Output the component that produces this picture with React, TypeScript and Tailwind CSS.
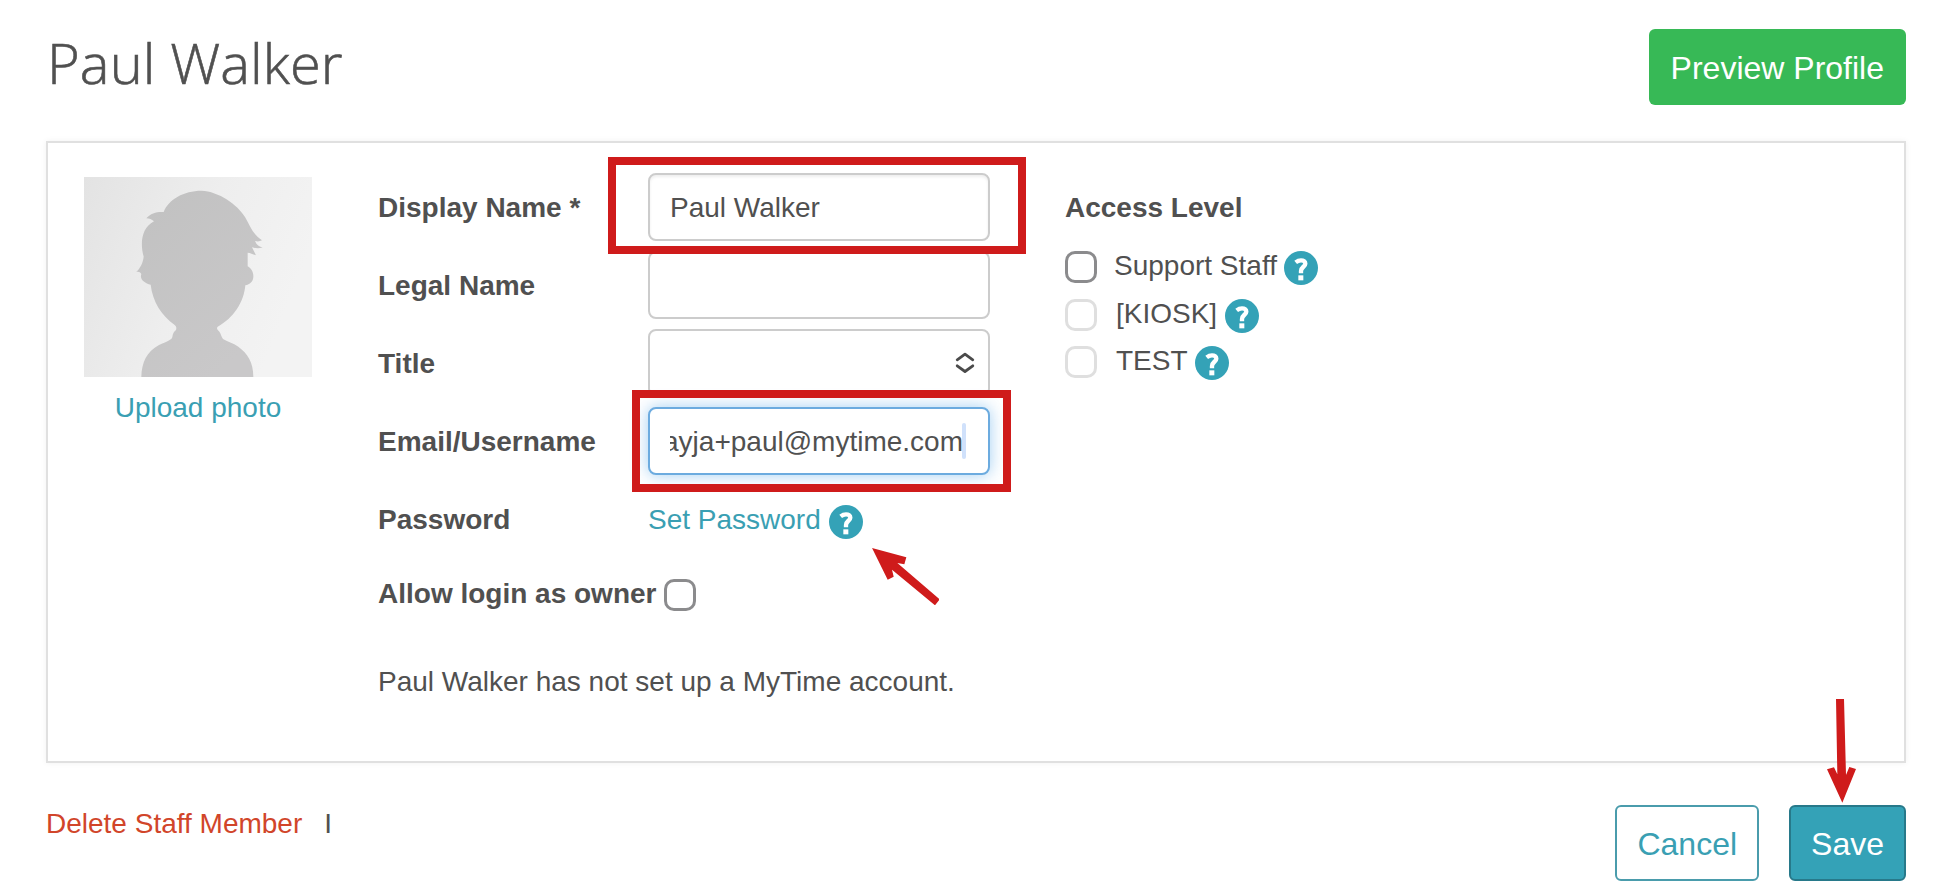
import React from 'react';
import { clsx } from 'clsx';

const HelpIcon = ({ className = '' }: { className?: string }) => (
  <svg viewBox="0 0 102 102" className={clsx('w-[34px] h-[34px] shrink-0', className)} aria-label="Help">
    <circle cx="51" cy="51" r="51" fill="#34a2b7" />
    <path d="M35 34 C40 30 46 28 51 28 C59 28 64 32 64 38 C64 47 51 48 51 60 L51 67" fill="none" stroke="#fff" strokeWidth="13" />
    <rect x="43" y="73" width="15" height="15" fill="#fff" />
  </svg>
);

const Checkbox = ({ disabled = false, className = '' }: { disabled?: boolean; className?: string }) => (
  <span
    role="checkbox"
    aria-checked={false}
    className={clsx(
      'block w-8 h-8 shrink-0 rounded-[10px] border-3 bg-white',
      disabled ? 'border-[#dfdfdf]' : 'border-[#8b8b8d]',
      className,
    )}
  />
);

const Avatar = () => (
  <svg viewBox="0 0 684 600" className="block w-[228px] h-[200px]">
    <defs>
      <linearGradient id="avatarBg" x1="0" y1="0" x2="1" y2="0.35">
        <stop offset="0" stopColor="#e3e3e3" />
        <stop offset="0.55" stopColor="#eeeeee" />
        <stop offset="1" stopColor="#f3f3f3" />
      </linearGradient>
      <linearGradient id="avatarFg" x1="0" y1="0" x2="0.6" y2="1">
        <stop offset="0" stopColor="#c1c1c1" />
        <stop offset="1" stopColor="#c9c8c9" />
      </linearGradient>
    </defs>
    <rect width="684" height="600" fill="url(#avatarBg)" />
    <path
      fill="url(#avatarFg)"
      d="M172 600 C173 557 188 524 225 504 C248 494 264 488 265 480 C266 470 270 464 276 459 C278 453 277 448 272 444
         C232 415 206 374 200 323 C182 319 166 307 172 291 C168 285 162 283 156 286 C168 274 177 258 179 239
         C168 199 172 153 210 133 C203 127 196 124 187 124 C200 109 217 104 239 105 C253 67 300 41 352 41
         C404 43 461 83 483 120 C497 143 506 173 534 190 C527 194 520 194 513 192 C518 204 526 210 536 211
         C526 215 514 214 504 211 C508 220 512 226 516 235 C505 231 499 228 491 227 L491 268
         C502 275 509 285 508 300 C507 314 498 322 484 325 C480 374 449 424 401 449 C397 454 400 459 405 463
         C411 470 411 479 417 486 C432 495 450 500 463 509 C491 530 508 555 508 600 Z"
    />
  </svg>
);

const Row = ({ label, children }: { label: string; children?: React.ReactNode }) => (
  <div className="flex h-[68px] items-center">
    <label className="w-[270px] shrink-0 pt-0.5 font-bold">{label}</label>
    {children}
  </div>
);

const fieldClass = 'flex w-[342px] h-[68px] items-center rounded-lg border-2 px-5 bg-white';

const accessLevels = [
  { name: 'Support Staff', disabled: false },
  { name: '[KIOSK]', disabled: true },
  { name: 'TEST', disabled: true },
];

export default function App() {
  return (
    <div className="relative w-[1950px] h-[896px] overflow-hidden bg-white px-[46px] pr-[44px] pt-[29px] font-['Liberation_Sans',Arial,sans-serif] text-[28px] leading-10 text-[#505050]">
      {/* Header */}
      <header className="flex h-[76px] items-start justify-between">
        <h1 className="pl-px font-['Open_Sans',sans-serif] text-[56px] leading-[66px] font-light tracking-[0.1px] [-webkit-text-stroke:0.6px_#505050]">
          Paul Walker
        </h1>
        <button className="h-[76px] rounded-md bg-[#37b956] px-[22px] pt-0.5 text-[32px] text-white">Preview Profile</button>
      </header>

      {/* Profile card */}
      <main className="mt-9 flex h-[622px] border-2 border-[#e0e0e0] pl-9 shadow-[0_0_6px_rgba(0,0,0,0.06)]">
        <div className="w-[228px] shrink-0 pt-[34px] text-center">
          <Avatar />
          <a className="mt-[11px] block text-[#3a9fb3]">Upload photo</a>
        </div>

        <form className="ml-[66px] w-[612px] shrink-0 pt-[30px]">
          <div className="flex flex-col gap-[10px]">
            <Row label="Display Name *">
              <div className={clsx(fieldClass, 'border-[#cccccc] pt-0.5 shadow-[inset_0_2px_3px_rgba(0,0,0,0.07)]')}>Paul Walker</div>
            </Row>
            <Row label="Legal Name">
              <div className={clsx(fieldClass, 'border-[#cccccc]')} />
            </Row>
            <Row label="Title">
              <div className={clsx(fieldClass, 'justify-end border-[#cccccc] !pr-[13px]')}>
                <svg viewBox="0 0 20 22" className="w-5 h-[22px]" fill="none" stroke="#4a4a4a" strokeWidth="2.8">
                  <path d="M2.200 7.800 L10 2.200 L17.800 7.800 M2.200 13.800 L10 19.500 L17.800 13.800" strokeLinecap="round" strokeLinejoin="round" />
                </svg>
              </div>
            </Row>
            <Row label="Email/Username">
              <div className={clsx(fieldClass, 'border-[#6cabdf] shadow-[0_0_16px_rgba(102,175,233,0.6)]')}>
                <div className="flex w-[296px] items-center justify-end overflow-hidden">
                  <span className="pt-0.5">ayja+paul@mytime.com</span>
                  <span className="-ml-px h-9 w-1 shrink-0 rounded-sm bg-[#d0e1fb]" />
                </div>
              </div>
            </Row>
            <Row label="Password">
              <a className="pt-0.5 text-[#3a9fb3]">Set Password</a>
              <HelpIcon className="mt-[6px] ml-2" />
            </Row>
          </div>

          <div className="mt-5 flex h-10 items-center">
            <label className="pt-0.5 font-bold">Allow login as owner</label>
            <Checkbox className="mt-1 ml-2" />
          </div>
          <p className="mt-[49px]">Paul Walker has not set up a MyTime account.</p>
        </form>

        <section className="ml-[75px] pt-[30px]">
          <h2 className="h-[68px] pt-px leading-[68px] font-bold">Access Level</h2>
          <ul className="mt-[3px]">
            {accessLevels.map((level) => (
              <li key={level.name} className="flex h-[46px] items-center nth-2:mt-[2px] nth-3:mt-px">
                <Checkbox disabled={level.disabled} />
                <span className={clsx('-mt-0.5', level.disabled ? 'ml-[19px]' : 'ml-[17px]')}>{level.name}</span>
                <HelpIcon className="mt-[2px] ml-[7.500px]" />
              </li>
            ))}
          </ul>
        </section>
      </main>

      {/* Footer actions */}
      <footer className="mt-[42px] flex h-[76px] items-start justify-between">
        <div className="-mt-px flex gap-[22px]">
          <a className="text-[#d1452a]">Delete Staff Member</a>
          <span>I</span>
        </div>
        <div className="flex gap-[30px] text-[32px]">
          <button className="h-[76px] rounded-md border-2 border-[#4a9cac] px-5 pt-0.5 text-[#3a9fb3]">Cancel</button>
          <button className="h-[76px] rounded-md border-2 border-[#27798a] bg-[#34a2b7] px-5 pt-0.5 text-white">Save</button>
        </div>
      </footer>

      {/* Callouts drawn over the form */}
      <div className="absolute top-[157px] left-[608px] w-[418px] h-[97px] border-8 border-[#cf1b1b]" />
      <div className="absolute top-[390px] left-[632px] w-[379px] h-[102px] border-8 border-[#cf1b1b]" />
      <svg viewBox="815 534 203 172" className="absolute top-[548px] left-[871.700px] w-[67.700px] h-[57.300px]">
        <path fill="#cf1b1b" d="M815 534 L918 562 L912 583 L891 579 L1018 688 L1004 706 L875 599 L880 620 L862 629 Z" />
      </svg>
      <svg viewBox="711 57 87 311" className="absolute top-[699px] left-[1827px] w-[29px] h-[103.700px]">
        <path fill="#cf1b1b" d="M738 57 L762 57 L768 285 L778 261 L798 267 L757 368 L711 268 L732 262 L742 283 Z" />
      </svg>
    </div>
  );
}
